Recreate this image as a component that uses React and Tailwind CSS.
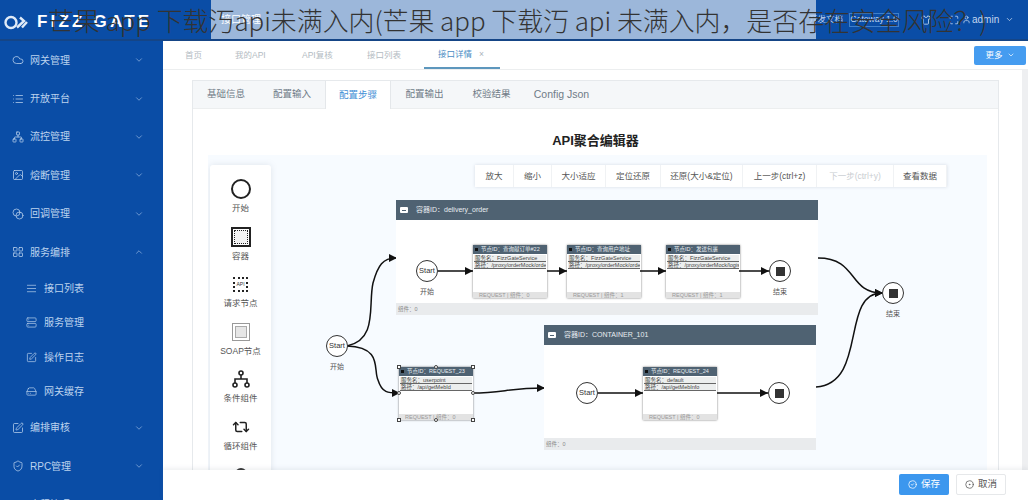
import {
  AlignJustify,
  ChevronDown,
  ChevronUp,
  Cloud,
  Network,
  ImageIcon,
  Blend,
  LayoutGrid,
  List,
  Server,
  SquarePen,
  HardDrive,
  ShieldCheck,
  User,
  Maximize,
  Shirt,
  CircleCheck,
  CircleDot,
  Repeat2,
} from 'lucide-react'

const cjk = "font-['Liberation_Sans','Noto_Sans_CJK_SC',sans-serif]"

const topMenu = [
  { icon: Cloud, label: '网关管理' },
  { icon: List, label: '开放平台' },
  { icon: Network, label: '流控管理' },
  { icon: ImageIcon, label: '熔断管理' },
  { icon: Blend, label: '回调管理' },
  { icon: LayoutGrid, label: '服务编排', open: true },
]
const subMenu = [
  { icon: AlignJustify, label: '接口列表' },
  { icon: Server, label: '服务管理' },
  { icon: SquarePen, label: '操作日志' },
  { icon: HardDrive, label: '网关缓存' },
]
const bottomMenu = [
  { icon: SquarePen, label: '编排审核' },
  { icon: ShieldCheck, label: 'RPC管理' },
  { icon: LayoutGrid, label: '小程管理' },
]

function MenuItem({ icon: Icon, label, open }) {
  const Chevron = open ? ChevronUp : ChevronDown
  return (
    <div className="h-[38.4px] flex items-center pl-[12px] pr-[19px] text-[#bcd3ee] text-[10px]">
      <Icon size={12} strokeWidth={1.5} className="mr-[6px] shrink-0" />
      <span className="flex-1">{label}</span>
      <Chevron size={10} className="text-[#7fa6d8]" />
    </div>
  )
}

function Sidebar() {
  return (
    <aside className="w-[163px] shrink-0 bg-[#0a4da6] overflow-hidden">
      {topMenu.map((m) => <MenuItem key={m.label} {...m} />)}
      {subMenu.map((m) => (
        <div key={m.label} className="h-[34.3px] flex items-center pl-[26px] text-[#bcd3ee] text-[10px]">
          <m.icon size={11} strokeWidth={1.5} className="mr-[7px] shrink-0" />
          <span>{m.label}</span>
        </div>
      ))}
      {bottomMenu.map((m) => <MenuItem key={m.label} {...m} />)}
    </aside>
  )
}

function Header() {
  return (
    <header className="h-[41px] shrink-0 flex bg-[#0a4da6] border-b-2 border-[#154586]">
      <div className="w-[211px] shrink-0 flex items-center pl-[4px] pt-[5px]">
        <svg width="25" height="15" viewBox="0 0 25 15" fill="none" stroke="#dfeaf7" strokeWidth="2.4">
          <circle cx="7" cy="7.5" r="5.5" />
          <path d="M13 12.5 L20 6 L16 2.5 M23 7 L18 12.5" />
        </svg>
        <span className="ml-[8px] text-white font-bold text-[17px] leading-[20px] tracking-[3.2px] whitespace-nowrap">FIZZ GATE</span>
      </div>
      <div className="w-[605px] shrink-0 bg-[#9cb7da] flex items-center pl-[10px] text-white text-[10px]">接口管理</div>
      <div className="flex-1 -ml-[7px] flex items-center pr-[9px] text-[#c3d7ef] text-[8.5px]">
        <span className="w-[33px] whitespace-nowrap">开发文档</span>
        <div className="ml-[7px] w-[50px] h-[14px] border border-[#3f7fc9] flex items-center justify-center whitespace-nowrap">Gateway 1.0</div>
        <Shirt size={10} className="ml-[22px]" />
        <Maximize size={10} className="ml-[18px]" />
        <User size={9} className="ml-[3px]" />
        <span className="ml-[1px] text-[10px]">admin</span>
        <ChevronDown size={9} className="ml-[6px]" />
      </div>
    </header>
  )
}

function PageTabs() {
  return (
    <div className="h-[29px] shrink-0 flex items-center bg-white border-b border-[#eceeef] pl-[22px] pr-[2px] text-[8.5px] text-[#b3bbc2]">
      <span className="w-[50px]">首页</span>
      <span className="w-[67px]">我的API</span>
      <span className="w-[65px]">API复核</span>
      <span className="w-[57px]">接口列表</span>
      <div className="h-full flex items-center w-[76px] pl-[14px] text-[#4a8cc4] border-b-2 border-[#5d97bd]">
        接口详情<span className="ml-[7px] text-[#a9b2ba]">×</span>
      </div>
      <div className="ml-auto w-[52px] h-[19px] rounded-[2px] bg-[#459cf0] text-white flex items-center justify-center gap-[4px]">
        更多<ChevronDown size={8} />
      </div>
    </div>
  )
}

function CardTabs() {
  const tabs = ['基础信息', '配置输入', '配置步骤', '配置输出', '校验结果', 'Config Json']
  return (
    <div className="h-[28px] flex bg-[#f5f7f9] border-b border-[#eceeef] text-[9.5px] text-[#6f7b87]">
      {tabs.map((t, i) => (
        <div
          key={t}
          className={
            i === 2
              ? 'w-[66px] h-[28px] flex items-center justify-center bg-white text-[#3f8fd6] border-x border-[#e4e7ea]'
              : i < 2
                ? 'w-[66px] flex items-center justify-center'
                : i === 5
                  ? 'w-[67px] flex items-center justify-center whitespace-nowrap text-[10.5px] ml-[3px]'
                  : 'w-[67px] flex items-center justify-center whitespace-nowrap'
          }
        >
          {t}
        </div>
      ))}
    </div>
  )
}

function Palette() {
  const items = [
    { label: '开始', icon: <div className="w-[20px] h-[20px] rounded-full border-2 border-[#222]" /> },
    {
      label: '容器',
      icon: (
        <div className="w-[20px] h-[20px] border-2 border-[#222] p-px">
          <div className="h-full border border-dotted border-[#222] bg-[#f3f3f3]" />
        </div>
      ),
    },
    {
      label: '请求节点',
      icon: <div className="w-[15px] h-[15px] border-2 border-dotted border-[#222] rounded-[1px] text-[5px] leading-[11px] text-center text-[#333]">API</div>,
    },
    {
      label: 'SOAP节点',
      icon: (
        <div className="w-[18px] h-[18px] border border-[#999] p-[2px]">
          <div className="h-full border border-[#aaa] bg-[#e6e6e6]" />
        </div>
      ),
    },
    {
      label: '条件组件',
      icon: (
        <svg width="18" height="18" viewBox="0 0 18 18" fill="none" stroke="#222" strokeWidth="1.6">
          <circle cx="9" cy="3" r="2" />
          <circle cx="3" cy="15" r="2" />
          <circle cx="15" cy="15" r="2" />
          <path d="M9 5 V9 M3 13 V9 H15 V13" />
        </svg>
      ),
    },
    { label: '循环组件', icon: <Repeat2 size={18} strokeWidth={2} className="text-[#222]" /> },
    { label: '', icon: <div className="w-[12px] h-[12px] rounded-full border-2 border-[#333]" /> },
  ]
  return (
    <div className="w-[61px] h-[320px] shrink-0 ml-[2px] mt-[10px] bg-white rounded-[3px] shadow-[0_0_6px_rgba(120,130,150,0.18)] pt-[13px] overflow-hidden">
      {items.map((it, i) => (
        <div key={i} className="h-[47.5px] flex flex-col items-center text-[8.5px] text-[#555]">
          <div className="h-[22px] flex items-center justify-center">{it.icon}</div>
          <span className="mt-[2px] whitespace-nowrap">{it.label}</span>
        </div>
      ))}
    </div>
  )
}

function Toolbar() {
  const btns = [
    ['放大', 'w-[39px]'],
    ['缩小', 'w-[38px]'],
    ['大小适应', 'w-[54px]'],
    ['定位还原', 'w-[55px]'],
    ['还原(大小&定位)', 'w-[82px]'],
    ['上一步(ctrl+z)', 'w-[74px]'],
    ['下一步(ctrl+y)', 'w-[77px]', true],
    ['查看数据', 'w-[53px]'],
  ]
  return (
    <div className="absolute left-[267px] top-[10px] flex h-[22px] bg-white shadow-[0_0_3px_rgba(120,130,150,0.25)] text-[8.5px] text-[#555]">
      {btns.map(([t, w, off]) => (
        <div key={t} className={`${w} flex items-center justify-center border-r border-[#f0f2f4] whitespace-nowrap ${off ? 'text-[#c9cdd1]' : ''}`}>
          {t}
        </div>
      ))}
    </div>
  )
}

function StartNode({ className, label = '开始' }) {
  return (
    <div className={`absolute w-[22px] h-[22px] ${className}`}>
      <div className="w-[22px] h-[22px] rounded-full border border-[#333] bg-white flex items-center justify-center text-[7.5px] text-[#333]">Start</div>
      {label && <div className="absolute top-[27px] left-0 w-full text-center text-[7px] text-[#555]">{label}</div>}
    </div>
  )
}

function EndNode({ className, label = '结束' }) {
  return (
    <div className={`absolute w-[22px] h-[22px] ${className}`}>
      <div className="w-[22px] h-[22px] rounded-full border border-[#333] bg-white flex items-center justify-center">
        <div className="w-[9px] h-[9px] bg-[#333]" />
      </div>
      {label && <div className="absolute top-[27px] left-0 w-full text-center text-[7px] text-[#555]">{label}</div>}
    </div>
  )
}

function RequestNode({ className, id, service, path, count, selected }) {
  return (
    <div className={`absolute w-[74px] h-[53px] bg-white flex flex-col text-[5.5px] text-[#444] shadow-[0_0_2px_rgba(0,0,0,0.55)] ${className}`}>
      <div className="h-[9px] shrink-0 bg-[#4f6272] text-[#e8edf1] flex items-center pl-[2px] whitespace-nowrap overflow-hidden">
        <span className="w-[3px] h-[3px] bg-[#111] mr-[3px]" />节点ID：{id}
      </div>
      <div className="mx-[1px] mt-[1px] h-[7px] bg-[#eceeee] border-b border-[#666] pl-[1px] leading-[6px] whitespace-nowrap overflow-hidden">服务名：{service}</div>
      <div className="mx-[1px] h-[7px] bg-[#eceeee] border-b border-[#666] pl-[1px] leading-[6px] whitespace-nowrap overflow-hidden">路径：{path}</div>
      <div className="mt-auto h-[6px] bg-[#e3e3e3] pl-[6px] leading-[6px] text-[#999] whitespace-nowrap">REQUEST | 组件：{count}</div>
      {selected && (
        <>
          <span className="absolute -left-[2px] -top-[2px] w-[4px] h-[4px] border border-[#444] bg-white" />
          <span className="absolute left-[35px] -top-[2px] w-[4px] h-[4px] rounded-full border border-[#444] bg-white" />
          <span className="absolute -right-[2px] -top-[2px] w-[4px] h-[4px] border border-[#444] bg-white" />
          <span className="absolute -left-[2px] top-[24px] w-[4px] h-[4px] rounded-full border border-[#444] bg-white" />
          <span className="absolute -right-[2px] top-[24px] w-[4px] h-[4px] rounded-full border border-[#444] bg-white" />
          <span className="absolute -left-[2px] -bottom-[2px] w-[4px] h-[4px] border border-[#444] bg-white" />
          <span className="absolute left-[35px] -bottom-[2px] w-[4px] h-[4px] rounded-full border border-[#444] bg-white" />
          <span className="absolute -right-[2px] -bottom-[2px] w-[4px] h-[4px] border border-[#444] bg-white" />
        </>
      )}
    </div>
  )
}

function Container({ className, title, children }) {
  return (
    <div className={`absolute bg-white flex flex-col ${className}`}>
      <div className="h-[20px] shrink-0 bg-[#4f6272] flex items-center pl-[4px] text-[7px] text-[#e8edf1]">
        <span className="w-[8px] h-[6px] bg-white rounded-[1px] mr-[8px] flex items-center justify-center">
          <span className="w-[4px] h-px bg-[#4f6272]" />
        </span>
        容器ID：{title}
      </div>
      <div className="relative flex-1">{children}</div>
      <div className="h-[12px] shrink-0 bg-[#e9ebed] pl-[2px] text-[5.5px] leading-[12px] text-[#888]">组件：0</div>
    </div>
  )
}

function Wires() {
  return (
    <svg className="absolute left-0 top-0" width="779" height="320" fill="none" stroke="#111" strokeWidth="1.5">
      <defs>
        <marker id="arrow" markerWidth="8" markerHeight="8" refX="7" refY="4" orient="auto" markerUnits="userSpaceOnUse">
          <path d="M0 0 L8 4 L0 8 Z" fill="#111" stroke="none" />
        </marker>
      </defs>
      <path d="M139 191 C170 185 160 150 165 128 C170 110 175 103 188 103" markerEnd="url(#arrow)" />
      <path d="M139 191 C175 192 165 215 170 225 C174 238 180 238 191 238" markerEnd="url(#arrow)" />
      <path d="M264 238 C295 238 300 233 336 233" markerEnd="url(#arrow)" />
      <path d="M610 103 C650 103 640 138 674 138" markerEnd="url(#arrow)" />
      <path d="M608 232 C660 228 632 138 674 138" markerEnd="url(#arrow)" />
    </svg>
  )
}

function Canvas() {
  return (
    <div className="relative h-[320px] ml-[15px] mr-[11px] bg-[#f7fbff] flex overflow-hidden">
      <Palette />
      <Toolbar />
      <Wires />
      <StartNode className="left-[118px] top-[180px]" />
      <RequestNode className="left-[191px] top-[212px]" id="REQUEST_23" service="userpoint" path="/api/getMebId" count="0" selected />
      <Container className="left-[188px] top-[45px] w-[422px] h-[115px]" title="delivery_order">
        <StartNode className="left-[20px] top-[40px]" />
        <RequestNode className="left-[77px] top-[25px]" id="查询献订单#22" service="FizzGateService" path="/proxy/orderMock/order/q" count="0" />
        <RequestNode className="left-[171px] top-[25px]" id="查询用户地址" service="FizzGateService" path="/proxy/orderMock/order/g" count="1" />
        <RequestNode className="left-[270px] top-[25px]" id="发送包裹" service="FizzGateService" path="/proxy/orderMock/logistic" count="1" />
        <svg className="absolute left-0 top-0" width="422" height="83" fill="none" stroke="#111" strokeWidth="1.5">
          <path d="M42 51 H77 M151 51 H171 M244 51 H270 M343 51 H373" />
          <path d="M77 51 l-8 -4 v8 Z M171 51 l-8 -4 v8 Z M270 51 l-8 -4 v8 Z M373 51 l-8 -4 v8 Z" fill="#111" stroke="none" />
        </svg>
        <EndNode className="left-[373px] top-[40px]" />
      </Container>
      <Container className="left-[336px] top-[170px] w-[272px] h-[125px]" title="CONTAINER_101">
        <StartNode className="left-[32px] top-[37px]" label="" />
        <RequestNode className="left-[99px] top-[22px]" id="REQUEST_24" service="default" path="/api/getMebInfo" count="0" />
        <svg className="absolute left-0 top-0" width="272" height="93" fill="none" stroke="#111" strokeWidth="1.5">
          <path d="M54 48 H99 M173 48 H224" />
          <path d="M99 48 l-8 -4 v8 Z M224 48 l-8 -4 v8 Z" fill="#111" stroke="none" />
        </svg>
        <EndNode className="left-[224px] top-[37px]" label="" />
      </Container>
      <EndNode className="left-[674px] top-[127px]" />
    </div>
  )
}

function Footer() {
  return (
    <div className="absolute left-0 right-0 bottom-0 h-[30px] bg-white shadow-[0_-2px_4px_rgba(120,130,150,0.12)] flex items-center justify-end pr-[22px] pb-[2px] gap-[7px] text-[9.5px]">
      <div className="w-[50px] h-[21px] rounded-[2px] bg-[#3c97ee] text-white flex items-center justify-center gap-[4px]">
        <CircleCheck size={9} />保存
      </div>
      <div className="w-[50px] h-[21px] rounded-[2px] border border-[#e6e8ea] bg-white text-[#555] flex items-center justify-center gap-[4px]">
        <CircleDot size={9} />取消
      </div>
    </div>
  )
}

export default function App() {
  return (
    <div className={`relative w-[1028px] h-[500px] overflow-hidden flex flex-col bg-white ${cjk}`}>
      <Header />
      <div className="flex-1 flex min-h-0">
        <Sidebar />
        <main className="relative flex-1 flex flex-col min-w-0">
          <PageTabs />
          <div className="flex-1 bg-white pl-[29px] pr-[23px] pt-[10px] border-r-[6px] border-[#eeeff1] min-h-0">
            <div className="w-[807px] h-[500px] border border-[#e6e9ec] bg-white">
              <CardTabs />
              <h2 className="h-[46px] pt-[23px] text-center text-[13px] leading-[18px] font-bold text-[#222]">API聚合编辑器</h2>
              <Canvas />
            </div>
          </div>
          <Footer />
        </main>
      </div>
      <h1 className="absolute left-[48px] top-px text-[25.9px] leading-[38px] font-light text-[#333] whitespace-nowrap font-['Noto_Sans_CJK_SC',sans-serif]">
        芒果 app 下载汅api未满入内(芒果 app 下载汅 api 未满入内，是否存在安全风险？)
      </h1>
    </div>
  )
}
